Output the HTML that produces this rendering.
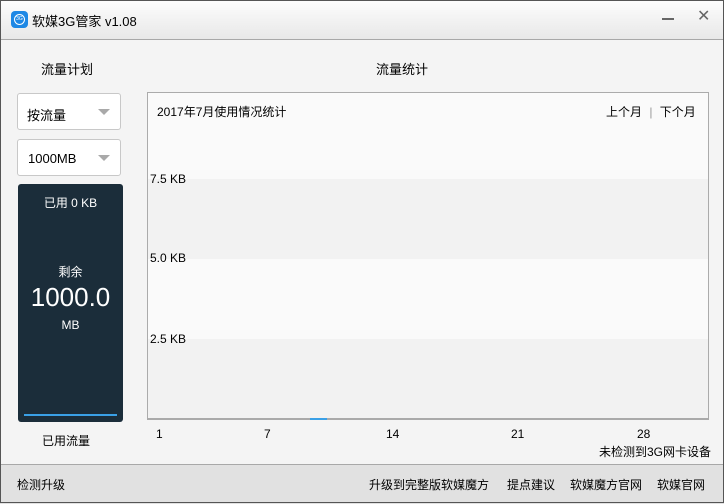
<html><head><style>
body{margin:0;width:724px;height:503px;overflow:hidden;font-family:"Liberation Sans","Noto Sans CJK SC",sans-serif;font-size:12px;color:#000}
.win{position:absolute;left:0;top:0;width:724px;height:503px;background:#f4f4f4}
.bd{position:absolute;left:0;top:0;width:722px;height:501px;border:1px solid #555}
.tb{position:absolute;left:0;top:0;width:724px;height:39px;background:linear-gradient(#fdfdfd,#e8e8e8);border-bottom:1px solid #a8a8a8}
.a{position:absolute;white-space:nowrap}
.sel{position:absolute;left:17px;width:102px;height:35px;border:1px solid #c8c8c8;border-radius:3px;background:#fff}
.tri{position:absolute;right:10px;top:15px;width:0;height:0;border-left:6px solid transparent;border-right:6px solid transparent;border-top:6px solid #a9a9a9}
.foot{position:absolute;left:0;top:464px;width:724px;height:39px;background:#e1e1e1;border-top:1px solid #a8a8a8}
</style></head><body><div class="win">
<div class="tb">
<div class="a" style="left:11px;top:11px;width:17px;height:17px;border-radius:4px;background:#1e88e5"><div style="position:absolute;left:3px;top:3px;width:9px;height:9px;border:1.5px solid #fff;border-radius:50%;font-size:5px;color:#fff;line-height:9px;text-align:center">3G</div></div>
<div class="a" style="left:32px;top:11px;font-size:13px">软媒3G管家 v1.08</div>
<div class="a" style="left:662px;top:18px;width:12px;height:2px;background:#666"></div>
<div class="a" style="left:697px;top:6px;font-size:16px;color:#666">✕</div>
</div>
<div class="a" style="left:41px;top:59px;font-size:13px">流量计划</div>
<div class="a" style="left:376px;top:59px;font-size:13px">流量统计</div>
<div class="sel" style="top:93px"><div class="a" style="left:9px;top:11px;font-size:13px">按流量</div><div class="tri"></div></div>
<div class="sel" style="top:139px"><div class="a" style="left:10px;top:11px;font-size:13px">1000MB</div><div class="tri"></div></div>
<div class="a" style="left:18px;top:184px;width:105px;height:238px;background:#1b2d3a;border-radius:3px;color:#fff;text-align:center">
<div style="margin-top:10px">已用 0 KB</div>
<div style="margin-top:52px">剩余</div>
<div style="font-size:26px;margin-top:2px">1000.0</div>
<div style="margin-top:5px">MB</div>
<div style="position:absolute;left:6px;top:230px;width:93px;height:2px;background:#3aa0e6"></div>
</div>
<div class="a" style="left:42px;top:432px">已用流量</div>
<div class="a" style="left:147px;top:92px;width:560px;height:325px;border:1px solid #ababab;border-bottom:2px solid #aaa;background:#fafafa">
<div class="a" style="left:0;top:86px;width:560px;height:80px;background:#f2f2f2"></div>
<div class="a" style="left:0;top:246px;width:560px;height:79px;background:#f2f2f2"></div>
<div class="a" style="left:9px;top:10px">2017年7月使用情况统计</div>
<div class="a" style="left:458px;top:10px">上个月 <span style="color:#999;margin:0 4px">|</span> 下个月</div>
<div class="a" style="left:2px;top:79px">7.5 KB</div>
<div class="a" style="left:2px;top:158px">5.0 KB</div>
<div class="a" style="left:2px;top:239px">2.5 KB</div>
<div class="a" style="left:162px;top:325px;width:17px;height:2px;background:#3aa0e6"></div>
</div>
<div class="a" style="left:156px;top:427px">1</div>
<div class="a" style="left:264px;top:427px">7</div>
<div class="a" style="left:386px;top:427px">14</div>
<div class="a" style="left:511px;top:427px">21</div>
<div class="a" style="left:637px;top:427px">28</div>
<div class="a" style="left:599px;top:443px">未检测到3G网卡设备</div>
<div class="foot">
<div class="a" style="left:17px;top:11px">检测升级</div>
<div class="a" style="left:369px;top:11px">升级到完整版软媒魔方</div>
<div class="a" style="left:507px;top:11px">提点建议</div>
<div class="a" style="left:570px;top:11px">软媒魔方官网</div>
<div class="a" style="left:657px;top:11px">软媒官网</div>
</div>
<div class="bd"></div>
</div></body></html>
